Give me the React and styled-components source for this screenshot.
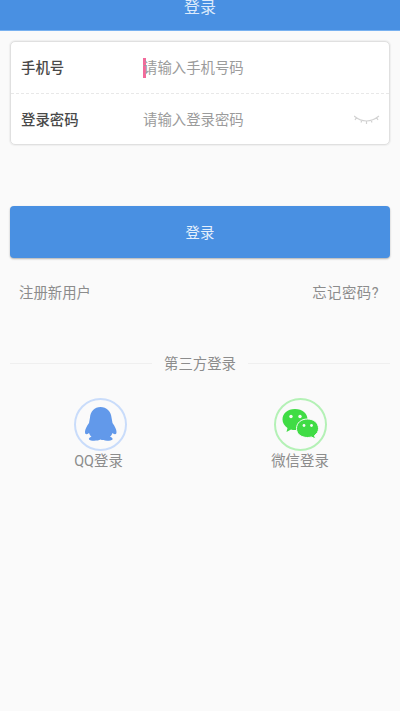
import React from 'react'
import styled, { createGlobalStyle } from 'styled-components'

const GlobalStyle = createGlobalStyle`
  :root {
    --blue: #4990e2;
    --gray: #8c8c8c;
  }
  * {
    box-sizing: border-box;
  }
  body {
    margin: 0;
    background: #fafafa;
    font-family: Roboto, 'Noto Sans CJK SC', sans-serif;
    font-size: 14.4px;
    line-height: 20px;
    color: var(--gray);
  }
`

const Screen = styled.div`
  height: 711px;
  overflow: hidden;
  display: flex;
  flex-direction: column;
`

const Header = styled.header`
  height: 31px;
  flex: none;
  display: flex;
  justify-content: center;
  align-items: flex-start;
  background: var(--blue);
  border-bottom: 1px solid #78b1f0;
  h1 {
    margin: 0;
    font-size: 16px;
    line-height: 16px;
    font-weight: 400;
    color: #dceafb;
  }
`

const Content = styled.main`
  padding: 10px 10px 0;
`

const Card = styled.div`
  height: 104px;
  background: #fff;
  border: 1px solid #e0e0e0;
  border-radius: 5px;
  box-shadow: 0 0 1px 1px #efefef;
`

const Field = styled.label`
  height: 51px;
  padding: 0 9px 0 10px;
  display: flex;
  align-items: center;
  & + & {
    height: 51px;
    padding-top: 1px;
    border-top: 1px dashed #e8e8e8;
  }
  span {
    width: 122px;
    flex: none;
    padding-top: 2px;
    font-weight: 500;
    color: #484848;
  }
  svg {
    flex: none;
  }
`

const Input = styled.input`
  flex: 1;
  min-width: 0;
  height: 22px;
  padding: 2px 0 0;
  border: 0;
  outline: 0;
  background: none;
  font: inherit;
  &::placeholder {
    color: #9b9b9b;
    opacity: 1;
  }
`

const Caret = styled.i`
  width: 3px;
  height: 20px;
  margin: 0 -3px 0 0;
  background: #f26a9b;
`

const Submit = styled.button`
  display: block;
  width: 100%;
  height: 52px;
  margin-top: 61px;
  padding: 3px 0 0;
  border: 0;
  border-radius: 4px;
  background: var(--blue);
  box-shadow: 0 1px 2px rgba(0, 0, 0, 0.3);
  font: inherit;
  color: #e4effc;
`

const Links = styled.div`
  margin-top: 26px;
  padding: 0 11px 0 9px;
  display: flex;
  justify-content: space-between;
`

const ForgotLink = styled.span`
  letter-spacing: 0.5px;
`

const Divider = styled.div`
  margin-top: 48px;
  display: flex;
  align-items: center;
  gap: 12px;
  span {
    padding-top: 3px;
  }
  &:before,
  &:after {
    content: '';
    flex: 1;
    height: 1px;
    background: #efefef;
  }
`

const Socials = styled.div`
  margin: 23px -10px 0;
  display: flex;
`

const Social = styled.div`
  flex: 1;
  display: flex;
  flex-direction: column;
  align-items: center;
  span {
    margin-top: 1px;
    margin-left: ${ ({ $shift }) => $shift || 0 }px;
  }
`

const Ring = styled.div`
  width: 53px;
  height: 53px;
  border: 2px solid ${ ({ $color }) => $color };
  border-radius: 50%;
  svg {
    display: block;
    margin: -2px;
  }
`

const ClosedEye = () => (
  <svg width="26" height="12" viewBox="0 0 26 12" fill="none" stroke="#d2d2d2" strokeWidth="1.2">
    <path d="M0 2 Q12.500 12 25 2 M2.500 3.5 L1 6 M8 6 L7 8.5 M12.500 7 V10 M17 6 L18 8.5 M22.500 3.5 L24 6" />
  </svg>
)

const QQIcon = () => (
  <svg width="53" height="53" viewBox="0 0 53 53" fill="#6299ea">
    <path d="M26.500 9 C20.500 9 16.500 13.500 16 19.500 L15 25 C12.500 28.500 11 31.500 11 34 C11 36.500 12.500 37 15 35 C15.500 36.500 16.500 38 17.500 38.800 C15.500 39.500 14.500 40.500 15 41.500 C16.500 43.200 24 43 26.500 41.500 C29 43 37 43.200 38.500 41.500 C39 40.500 38 39.500 36 38.800 C37 38 38 36.500 38.500 35 C41 37 42.500 36.500 42.500 34 C42.500 31.500 41 28.500 38.500 25 L37.500 19.500 C37 13.500 32.500 9 26.500 9 Z" />
  </svg>
)

const WeChatIcon = () => (
  <svg width="53" height="53" viewBox="0 0 53 53" fill="#40dc45">
    <path d="M21 11 C13.500 11 8.500 15.500 8.500 21.500 C8.500 25 10.500 28 13.500 30 L12.500 34 L17 31.500 C18.500 32 20 32.200 22 32 C33 31 33.500 25 33.500 21.500 C33.500 15.500 28.500 11 21 11 Z" />
    <path
      d="M33.500 21 C27 21 22.500 25 22.500 30.500 C22.500 36 27 39.500 33.500 39.500 C35 39.500 36.500 39.200 37.500 39 L41.500 41 L40.500 37.500 C43 35.800 44.500 33.500 44.500 30.500 C44.500 25 40 21 33.500 21 Z"
      stroke="#fafafa"
      strokeWidth="1"
    />
    <g fill="#fafafa">
      <circle cx="17" cy="18.500" r="1.700" />
      <circle cx="26" cy="18.500" r="1.700" />
      <circle cx="30" cy="27.500" r="1.400" />
      <circle cx="37.500" cy="27.500" r="1.400" />
    </g>
  </svg>
)

export default () => (
  <>
    <GlobalStyle />
    <Screen>
      <Header>
        <h1>登录</h1>
      </Header>
      <Content>
        <Card>
          <Field>
            <span>手机号</span>
            <Caret />
            <Input type="tel" placeholder="请输入手机号码" />
          </Field>
          <Field>
            <span>登录密码</span>
            <Input type="password" placeholder="请输入登录密码" />
            <ClosedEye />
          </Field>
        </Card>
        <Submit>登录</Submit>
        <Links>
          <span>注册新用户</span>
          <ForgotLink>忘记密码?</ForgotLink>
        </Links>
        <Divider>
          <span>第三方登录</span>
        </Divider>
        <Socials>
          <Social $shift={-3}>
            <Ring $color="#c9dcfa">
              <QQIcon />
            </Ring>
            <span>QQ登录</span>
          </Social>
          <Social>
            <Ring $color="#b4f1b6">
              <WeChatIcon />
            </Ring>
            <span>微信登录</span>
          </Social>
        </Socials>
      </Content>
    </Screen>
  </>
)
